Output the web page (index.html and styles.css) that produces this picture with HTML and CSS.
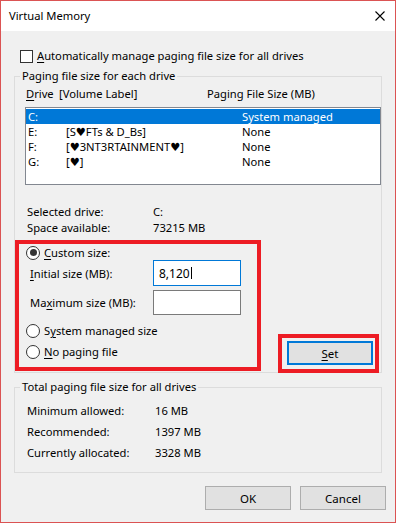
FILE: index.html
```html
<!DOCTYPE html>
<html lang="en">
<head>
  <meta charset="UTF-8">
  <title>Virtual Memory</title>
  <link rel="stylesheet" href="styles.css">
</head>
<body>
  <div class="window">
    <div class="titlebar">
      <span class="title">Virtual Memory</span>
      <svg class="close" width="10" height="10" viewBox="0 0 10 10">
        <path d="M0.5 0.5L9.5 9.5M9.5 0.5L0.5 9.5" stroke="#000" stroke-width="1.1" fill="none"/>
      </svg>
    </div>

    <div class="content">
      <div class="check-row">
        <span class="checkbox"></span>
        <span><u>A</u>utomatically manage paging file size for all drives</span>
      </div>

      <fieldset class="group drives">
        <legend>Paging file size for each drive</legend>
        <div class="list-head">
          <span class="head-drive"><u>D</u>rive</span>
          <span class="head-label">[Volume Label]</span>
          <span class="head-size">Paging File Size (MB)</span>
        </div>
        <div class="listbox">
          <div class="list-row selected"><span class="col-drive">C:</span><span class="col-label"></span><span>System managed</span></div>
          <div class="list-row"><span class="col-drive">E:</span><span class="col-label">[S♥FTs &amp; D_Bs]</span><span>None</span></div>
          <div class="list-row"><span class="col-drive">F:</span><span class="col-label">[♥3NT3RTAINMENT♥]</span><span>None</span></div>
          <div class="list-row"><span class="col-drive">G:</span><span class="col-label">[♥]</span><span>None</span></div>
        </div>

        <div class="info">
          <div class="info-row"><span class="info-key">Selected drive:</span><span>C:</span></div>
          <div class="info-row"><span class="info-key">Space available:</span><span>73215 MB</span></div>
        </div>

        <div class="size-area">
          <div class="mark size-box">
            <div class="radio-row first"><span class="radio checked"></span><span><u>C</u>ustom size:</span></div>
            <div class="field-row initial">
              <span class="field-label"><u>I</u>nitial size (MB):</span>
              <div class="input focused">8,120<span class="caret"></span></div>
            </div>
            <div class="field-row maximum">
              <span class="field-label">Ma<u>x</u>imum size (MB):</span>
              <div class="input"></div>
            </div>
            <div class="radio-row system"><span class="radio"></span><span>S<u>y</u>stem managed size</span></div>
            <div class="radio-row nopaging"><span class="radio"></span><span><u>N</u>o paging file</span></div>
          </div>
          <div class="mark set-box">
            <button class="btn set-btn"><u>S</u>et</button>
          </div>
        </div>
      </fieldset>

      <fieldset class="group totals">
        <legend>Total paging file size for all drives</legend>
        <div class="total-row"><span class="total-key">Minimum allowed:</span><span>16 MB</span></div>
        <div class="total-row"><span class="total-key">Recommended:</span><span>1397 MB</span></div>
        <div class="total-row"><span class="total-key">Currently allocated:</span><span>3328 MB</span></div>
      </fieldset>

      <div class="dialog-buttons">
        <button class="btn">OK</button>
        <button class="btn">Cancel</button>
      </div>
    </div>
  </div>
</body>
</html>
```

FILE: styles.css
```css
/* Windows 10 style dialog */
body {
  margin: 0;
  font-family: "Noto Sans", "DejaVu Sans", sans-serif;
  font-size: 11.2px;
  color: #000;
  background: #fff;
}
u {
  text-decoration-thickness: 1px;
  text-underline-offset: 2px;
}
.window {
  width: 396px;
  height: 523px;
  box-sizing: border-box;
  border: 1px solid #db5353;
  background-color: #f0f0f0;
  display: flex;
  flex-direction: column;
}
.titlebar {
  height: 30px;
  background: #fff;
  display: flex;
  align-items: center;
  padding-left: 8px;
  padding-right: 10px;
}
.title {
  flex: 1;
  line-height: 16px;
}
.close {
  display: block;
}
.content {
  display: flex;
  flex-direction: column;
}
.check-row {
  margin-top: 17px;
  margin-left: 19px;
  height: 16px;
  line-height: 16px;
  display: flex;
  align-items: center;
  gap: 4px;
}
.checkbox {
  width: 11px;
  height: 11px;
  border: 1px solid #333;
  background: #fff;
}

/* group boxes */
.group {
  margin: 0 13px;
  padding: 0;
  border: 1px solid #dcdcdc;
  min-width: 0;
}
.group legend {
  margin-left: 5px;
  padding: 0 2px;
  line-height: 16px;
}
.drives {
  margin-top: 4px;
  padding-bottom: 1px;
}
.list-head {
  margin-top: 2px;
  height: 16px;
  line-height: 16px;
  display: flex;
  padding-left: 11px;
}
.head-drive {
  width: 33px;
}
.head-label {
  width: 148px;
}
.listbox {
  margin-top: 5px;
  margin-left: 10px;
  height: 78px;
  box-sizing: border-box;
  border: 1px solid #828790;
  background: #fff;
  padding: 1px 0;
}
.list-row {
  height: 15px;
  line-height: 15px;
  display: flex;
  padding-left: 2px;
  overflow: hidden;
}
.list-row.selected {
  background: #0078d7;
  color: #fff;
}
.col-drive {
  width: 38px;
}
.col-label {
  width: 176px;
}
.info {
  margin-top: 19px;
  padding-left: 12px;
}
.info-row {
  height: 16px;
  line-height: 16px;
  display: flex;
}
.info-key {
  width: 126px;
}

/* custom size area */
.size-area {
  margin-top: 4px;
  display: flex;
  align-items: flex-end;
}
.mark {
  border: 4px solid #ed1c24;
  box-sizing: border-box;
}
.size-box {
  width: 246px;
  height: 131px;
  padding: 1px 0 0 7px;
}
.radio-row {
  height: 15px;
  line-height: 16px;
  display: flex;
  align-items: center;
  gap: 4px;
}
.radio-row.system {
  margin-top: 8px;
  height: 16px;
}
.radio-row.nopaging {
  margin-top: 5px;
  height: 16px;
}
.radio {
  width: 12px;
  height: 12px;
  border: 1px solid #333;
  border-radius: 50%;
  background: #fff;
  position: relative;
}
.radio.checked::after {
  content: "";
  position: absolute;
  left: 2.5px;
  top: 2.5px;
  width: 7px;
  height: 7px;
  border-radius: 50%;
  background: #333;
}
.field-row {
  display: flex;
  align-items: center;
  padding-left: 4px;
  height: 26px;
}
.field-row.maximum {
  margin-top: 4px;
  height: 25px;
}
.field-label {
  width: 123px;
}
.input {
  width: 88px;
  height: 100%;
  box-sizing: border-box;
  border: 1px solid #7a7a7a;
  background: #fff;
  padding-left: 5px;
  display: flex;
  align-items: center;
  font-size: 12px;
}
.input.focused {
  border-color: #0078d7;
}
.caret {
  width: 1px;
  height: 12px;
  background: #000;
  margin-left: 1px;
}
.set-box {
  margin-left: auto;
  margin-right: 2px;
  margin-bottom: -2px;
  width: 101px;
  height: 39px;
  padding: 3px 2px 4px 5px;
}

/* buttons */
.btn {
  font-family: inherit;
  font-size: 11.5px;
  color: #000;
  background: #e1e1e1;
  border: 1px solid #adadad;
  width: 86px;
  height: 24px;
  padding: 0;
  margin: 0;
}
.set-btn {
  border: 2px solid #0078d7;
  display: block;
}

/* totals */
.totals {
  margin-top: 6px;
  padding-bottom: 9px;
}
.total-row {
  height: 21px;
  line-height: 21px;
  display: flex;
  padding-left: 12px;
}
.total-row:first-of-type {
  margin-top: 5px;
}
.total-key {
  width: 128px;
}
.dialog-buttons {
  margin-top: 13px;
  margin-right: 9px;
  display: flex;
  justify-content: flex-end;
  gap: 9px;
}
```
